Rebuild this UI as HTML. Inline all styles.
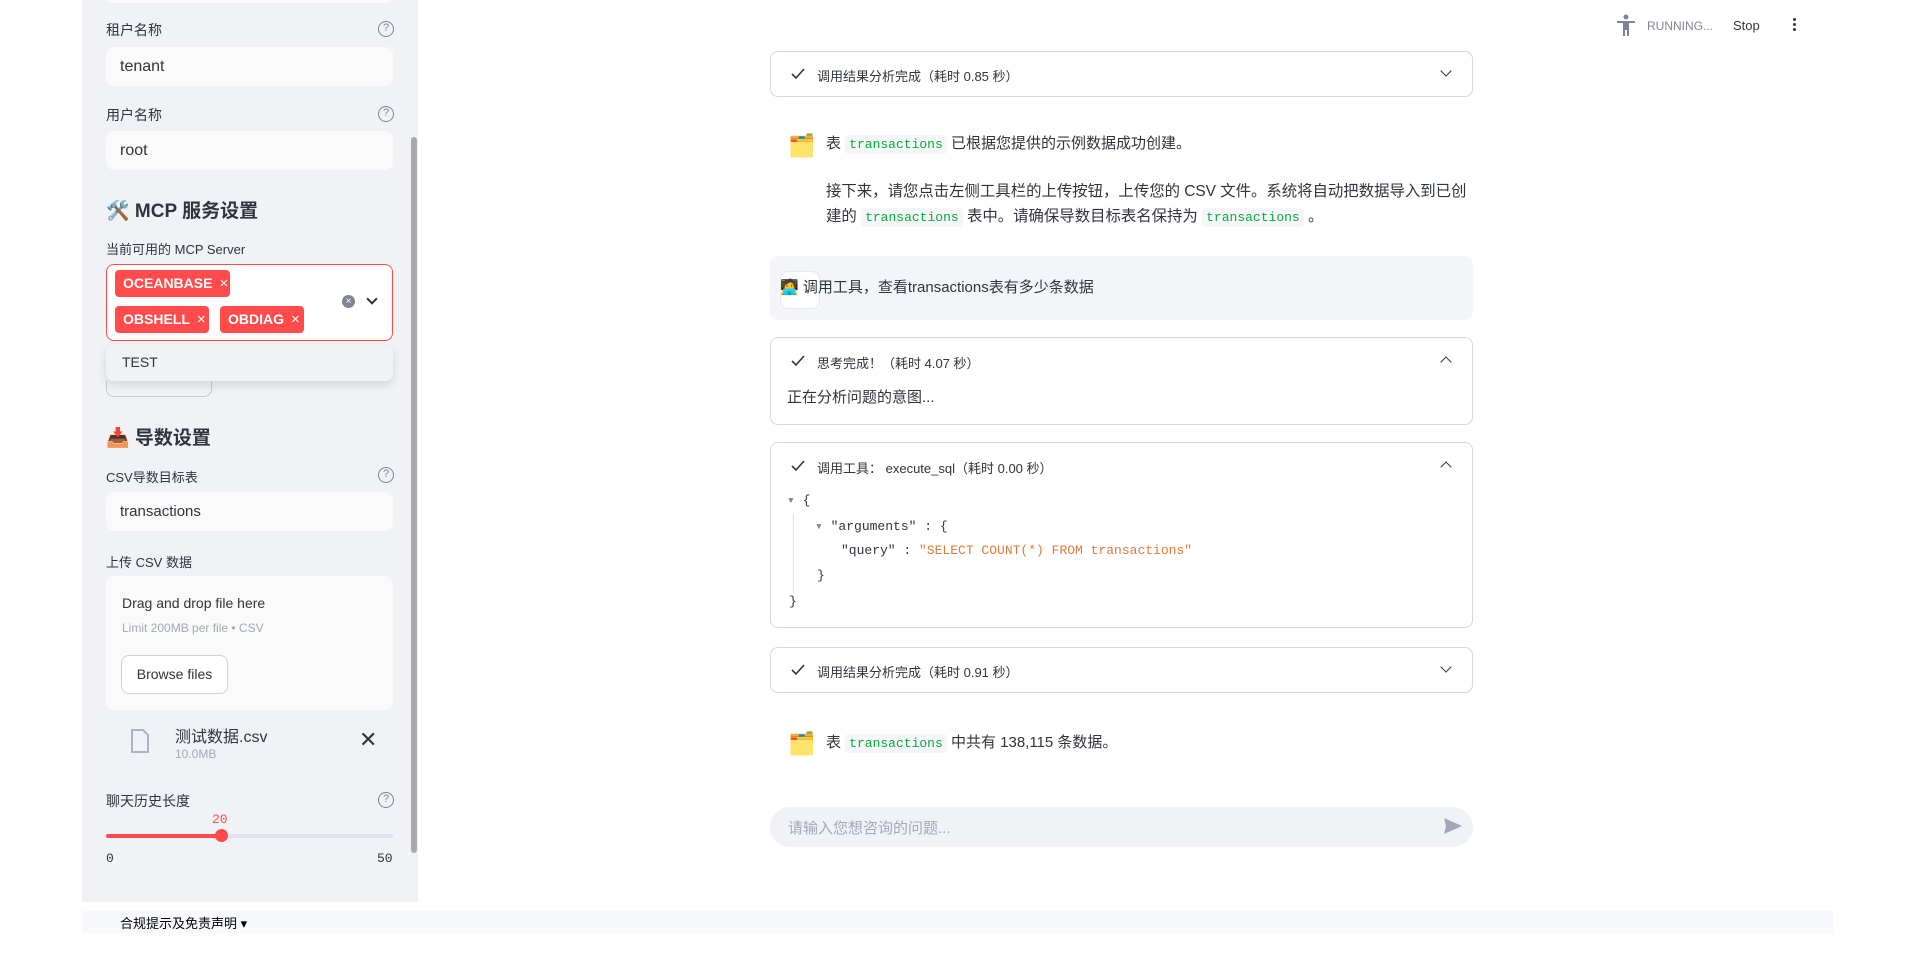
<!DOCTYPE html>
<html><head><meta charset="utf-8"><style>
*{box-sizing:border-box;margin:0;padding:0}
body{width:1920px;height:953px;background:#fff;font-family:"Liberation Sans","Noto Sans CJK SC",sans-serif;color:#31333f;position:relative;overflow:hidden}
.abs{position:absolute}
.side{position:absolute;left:82px;top:0;width:336px;height:902px;background:#f0f2f6}
.lbl{position:absolute;left:106px;font-size:14px;color:#31333f}
.help{position:absolute;left:378px;width:16px;height:16px;border:1.5px solid #808495;border-radius:50%;font-size:11px;line-height:13px;text-align:center;color:#808495}
.inp{position:absolute;left:106px;width:287px;background:#fafafa;border-radius:8px;font-size:16px;padding-left:14px;display:flex;align-items:center}
.tag{position:absolute;height:27px;background:#ff4b4b;color:#fff;border-radius:4px;font-size:14px;font-weight:bold;padding-left:8px;line-height:27px;white-space:nowrap}
.tag span{font-weight:normal;margin-left:7px;font-size:15px}
.exp{position:absolute;left:770px;width:703px;border:1px solid #d6d8de;border-radius:8px;background:#fff}
.eh{position:absolute;left:46px;font-size:13px;color:#31333f}
.ck{position:absolute;left:20px}
.chev{position:absolute;right:22px;width:8px;height:8px;border-right:1.6px solid #31333f;border-bottom:1.6px solid #31333f}
code{font-family:"Liberation Mono",monospace;font-size:13px;color:#09ab3b;background:#f5f6f8;padding:2px 4px;border-radius:4px}
.mono{font-family:"Liberation Mono",monospace;font-size:13px;position:absolute}
</style></head><body>
<div class="side">
<div class="abs" style="left:24px;top:-10px;width:287px;height:13px;background:#fafafa;border-radius:8px"></div>
<div class="abs" style="left:329px;top:137px;width:6px;height:716px;background:#a8a8ad;border-radius:3px"></div>
</div>
<div class="lbl" style="top:20px">租户名称</div><div class="help" style="top:21px">?</div>
<div class="inp" style="top:47px;height:39px">tenant</div>
<div class="lbl" style="top:105px">用户名称</div><div class="help" style="top:106px">?</div>
<div class="inp" style="top:131px;height:39px">root</div>
<div class="abs" style="left:106px;top:196px;font-size:19px;font-weight:bold">🛠️ MCP 服务设置</div>
<div class="lbl" style="top:239px;font-size:13px">当前可用的 MCP Server</div>
<div class="abs" style="left:106px;top:264px;width:287px;height:77px;border:1px solid #ff4b4b;border-radius:8px;background:#fff"></div>
<div class="tag" style="left:115px;top:270px;width:115px">OCEANBASE<span>×</span></div>
<div class="tag" style="left:115px;top:306px;width:94px">OBSHELL<span>×</span></div>
<div class="tag" style="left:220px;top:306px;width:84px">OBDIAG<span>×</span></div>
<div class="abs" style="left:342px;top:295px;width:13px;height:13px;border-radius:50%;background:#808495;color:#fff;font-size:10px;line-height:13px;text-align:center">×</div>
<div class="abs" style="left:368px;top:295px;width:8px;height:8px;border-right:2px solid #31333f;border-bottom:2px solid #31333f;transform:rotate(45deg)"></div>
<div class="abs" style="left:106px;top:381px;width:106px;height:16px;border:1px solid #c8cad0;border-top:none;border-radius:0 0 8px 8px"></div>
<div class="abs" style="left:106px;top:344px;width:287px;height:37px;background:#f0f2f6;border-radius:8px;box-shadow:0 4px 10px rgba(0,0,0,.12);font-size:14px;padding-left:16px;line-height:37px">TEST</div>
<div class="abs" style="left:106px;top:423px;font-size:19px;font-weight:bold">📥 导数设置</div>
<div class="lbl" style="top:467px;font-size:13px">CSV导数目标表</div><div class="help" style="top:467px">?</div>
<div class="inp" style="top:492px;height:39px;font-size:15px">transactions</div>
<div class="lbl" style="top:552px;font-size:13px">上传 CSV 数据</div>
<div class="abs" style="left:106px;top:576px;width:287px;height:134px;background:#fafafa;border-radius:8px"></div>
<div class="abs" style="left:122px;top:595px;font-size:14px">Drag and drop file here</div>
<div class="abs" style="left:122px;top:621px;font-size:12px;color:#a3a8b8">Limit 200MB per file • CSV</div>
<div class="abs" style="left:121px;top:655px;width:107px;height:39px;border:1px solid #d0d2d8;border-radius:8px;font-size:14px;line-height:37px;text-align:center;background:#fff">Browse files</div>
<svg class="abs" style="left:130px;top:729px" width="20" height="24" viewBox="0 0 20 24"><path d="M2 1h11l5 5v17H2z" fill="none" stroke="#a8b4cc" stroke-width="2"/></svg>
<div class="abs" style="left:175px;top:723px;font-size:16px">测试数据.csv</div>
<div class="abs" style="left:175px;top:747px;font-size:12px;color:#a3a8b8">10.0MB</div>
<div class="abs" style="left:359px;top:729px;font-size:22px;line-height:22px">✕</div>
<div class="lbl" style="top:791px">聊天历史长度</div><div class="help" style="top:792px">?</div>
<div class="mono" style="left:212px;top:812px;color:#ff4b4b;font-size:13px">20</div>
<div class="abs" style="left:106px;top:834px;width:287px;height:4px;background:#dde3ea;border-radius:2px"></div>
<div class="abs" style="left:106px;top:834px;width:116px;height:4px;background:#ff4b4b;border-radius:2px"></div>
<div class="abs" style="left:215px;top:829px;width:13px;height:13px;background:#ff4b4b;border-radius:50%"></div>
<div class="mono" style="left:106px;top:851px;color:#31333f">0</div>
<div class="mono" style="left:377px;top:851px;color:#31333f">50</div>
<div class="abs" style="left:82px;top:911px;width:1751px;height:22px;background:#f8f9fc"></div>
<div class="abs" style="left:120px;top:913px;font-size:13px;color:#000">合规提示及免责声明 ▾</div>

<svg class="abs" style="left:1616px;top:14px" width="20" height="22" viewBox="0 0 20 22"><circle cx="10" cy="3" r="2.5" fill="#808495"/><path d="M1 7h18v2h-6v13h-2v-6h-2v6H7V9H1z" fill="#808495"/></svg>
<div class="abs" style="left:1647px;top:19px;font-size:12px;color:#808495">RUNNING...</div>
<div class="abs" style="left:1733px;top:18px;font-size:13px;color:#31333f">Stop</div>
<div class="abs" style="left:1793px;top:18px;width:4px;font-size:0"><div style="width:3px;height:3px;background:#31333f;border-radius:50%;margin-bottom:2px"></div><div style="width:3px;height:3px;background:#31333f;border-radius:50%;margin-bottom:2px"></div><div style="width:3px;height:3px;background:#31333f;border-radius:50%"></div></div>

<div class="exp" style="top:51px;height:46px"><svg class="ck" style="top:16px" width="14" height="12" viewBox="0 0 14 12"><path d="M1 6l4 4 8-9" fill="none" stroke="#31333f" stroke-width="1.6"/></svg><div class="eh" style="top:14px">调用结果分析完成（耗时 0.85 秒）</div><div class="chev" style="top:15px;transform:rotate(45deg)"></div></div>
<div class="abs" style="left:788px;top:133px;font-size:22px">🗂️</div>
<div class="abs" style="left:826px;top:132px;font-size:15px;line-height:24px">表 <code>transactions</code> 已根据您提供的示例数据成功创建。</div>
<div class="abs" style="left:826px;top:179px;width:645px;font-size:15.4px;line-height:25px">接下来，请您点击左侧工具栏的上传按钮，上传您的 CSV 文件。系统将自动把数据导入到已创建的 <code>transactions</code> 表中。请确保导数目标表名保持为 <code>transactions</code> 。</div>
<div class="abs" style="left:770px;top:256px;width:703px;height:64px;background:#f0f2f6;border-radius:8px;opacity:.75"></div>
<div class="abs" style="left:780px;top:271px;width:40px;height:38px;background:#fff;border-radius:8px;border:1px solid #e6e8ec"></div>
<div class="abs" style="left:780px;top:276px;font-size:15px">🧑‍💻 调用工具，查看transactions表有多少条数据</div>
<div class="exp" style="top:337px;height:88px"><svg class="ck" style="top:17px" width="14" height="12" viewBox="0 0 14 12"><path d="M1 6l4 4 8-9" fill="none" stroke="#31333f" stroke-width="1.6"/></svg><div class="eh" style="top:15px">思考完成！（耗时 4.07 秒）</div><div class="chev" style="top:20px;transform:rotate(-135deg)"></div><div class="abs" style="left:16px;top:48px;font-size:15px">正在分析问题的意图...</div></div>
<div class="exp" style="top:442px;height:186px"><svg class="ck" style="top:17px" width="14" height="12" viewBox="0 0 14 12"><path d="M1 6l4 4 8-9" fill="none" stroke="#31333f" stroke-width="1.6"/></svg><div class="eh" style="top:15px">调用工具： execute_sql（耗时 0.00 秒）</div><div class="chev" style="top:20px;transform:rotate(-135deg)"></div>
<div class="mono" style="left:16px;top:50px;color:#31333f"><span style="color:#808495">▾</span> {</div>
<div class="mono" style="left:44px;top:76px;color:#31333f"><span style="color:#808495">▾</span> "arguments" : {</div>
<div class="mono" style="left:70px;top:100px;color:#31333f">"query" : <span style="color:#e07a3a">"SELECT COUNT(*) FROM transactions"</span></div>
<div class="mono" style="left:46px;top:125px;color:#31333f">}</div>
<div class="mono" style="left:18px;top:151px;color:#31333f">}</div>
<div class="abs" style="left:22px;top:70px;width:1px;height:80px;background:#e0e0e0"></div></div>
<div class="exp" style="top:647px;height:46px"><svg class="ck" style="top:16px" width="14" height="12" viewBox="0 0 14 12"><path d="M1 6l4 4 8-9" fill="none" stroke="#31333f" stroke-width="1.6"/></svg><div class="eh" style="top:14px">调用结果分析完成（耗时 0.91 秒）</div><div class="chev" style="top:15px;transform:rotate(45deg)"></div></div>
<div class="abs" style="left:788px;top:731px;font-size:22px">🗂️</div>
<div class="abs" style="left:826px;top:731px;font-size:15px;line-height:24px">表 <code>transactions</code> 中共有 138,115 条数据。</div>
<div class="abs" style="left:770px;top:807px;width:703px;height:40px;background:#f0f2f6;border-radius:20px"></div>
<div class="abs" style="left:788px;top:817px;font-size:15px;color:#a3a8b8">请输入您想咨询的问题...</div>
<svg class="abs" style="left:1443px;top:817px" width="20" height="18" viewBox="0 0 20 18"><path d="M1 1l18 8-18 8 2-8z" fill="#a3a8b8"/></svg>
</body></html>
